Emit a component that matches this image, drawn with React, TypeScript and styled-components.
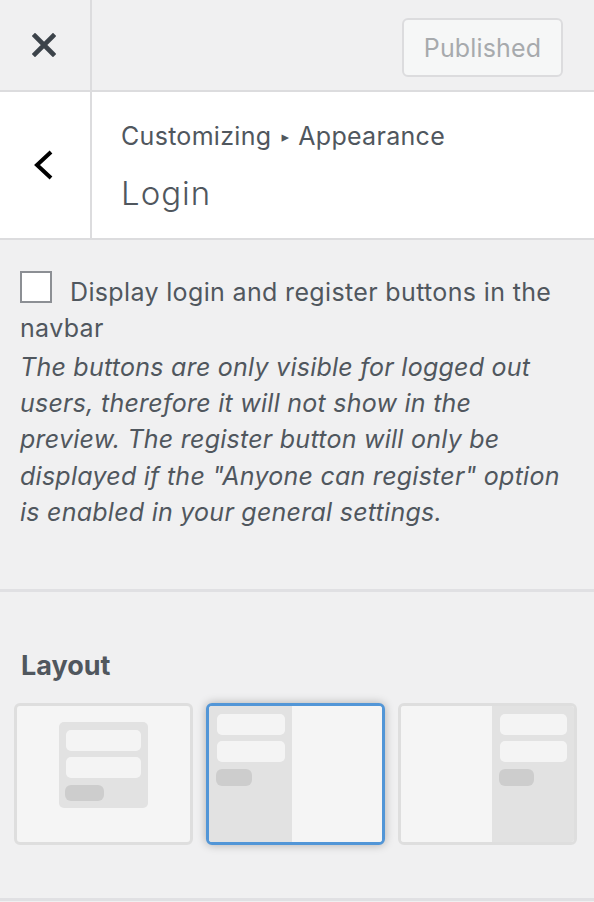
import React from "react";
import styled, { createGlobalStyle, css } from "styled-components";

const GlobalStyle = createGlobalStyle`
  html, body {
    margin: 0;
    padding: 0;
    background: #f0f0f1;
  }
  * { box-sizing: border-box; }
`;

const FONT = `Inter, Roboto, "Liberation Sans", sans-serif`;

const Sidebar = styled.div`
  width: 594px;
  height: 902px;
  overflow: hidden;
  background: #f0f0f1;
  font-family: ${FONT};
  color: #50575e;
  display: flex;
  flex-direction: column;
`;

const TopBar = styled.div`
  display: flex;
  height: 92px;
  border-bottom: 2px solid #dcdcde;
  background: #f0f0f1;
`;

const IconCell = styled.div`
  width: 92px;
  flex: none;
  border-right: 2px solid #dcdcde;
  display: flex;
  align-items: center;
  justify-content: center;
  padding-right: 2px;
`;

const TopActions = styled.div`
  flex: 1;
  display: flex;
  justify-content: flex-end;
  align-items: flex-start;
  padding: 18px 31px 0 0;
`;

const PublishButton = styled.button`
  width: 161px;
  height: 59px;
  border: 2px solid #dcdcde;
  border-radius: 6px;
  background: #f6f7f7;
  color: #a7aaad;
  font-family: ${FONT};
  font-size: 25px;
  letter-spacing: 0.15px;
  padding: 0;
  cursor: default;
`;

const SectionHeader = styled.div`
  display: flex;
  height: 148px;
  background: #ffffff;
  border-bottom: 2px solid #dcdcde;
`;

const TitleBlock = styled.div`
  flex: 1;
  padding: 26px 0 0 29px;
  display: flex;
  flex-direction: column;
`;

const Breadcrumb = styled.span`
  font-size: 25px;
  letter-spacing: 0.3px;
  line-height: 36px;
  color: #50575e;
`;

const Arrow = styled.span`
  font-family: "DejaVu Sans", sans-serif;
  font-size: 15px;
  margin: 0 9px 0 10px;
  vertical-align: 3px;
`;

const Title = styled.h3`
  margin: 16px 0 0;
  font-size: 33px;
  font-weight: 300;
  letter-spacing: 1px;
  line-height: 44px;
  color: #50575e;
`;

const Section = styled.div<{ $top: number; $bottom: number }>`
  padding: ${(p) => p.$top}px 20px ${(p) => p.$bottom}px;
  border-bottom: 3px solid #e0e0e3;
`;

const ControlLabel = styled.label`
  display: block;
  font-size: 25px;
  letter-spacing: 0.35px;
  line-height: 36.4px;
  color: #50575e;
`;

const Checkbox = styled.span`
  display: inline-block;
  width: 32px;
  height: 32px;
  border: 2px solid #8c8f94;
  background: #ffffff;
  margin-right: 18px;
  vertical-align: -2px;
`;

const Description = styled.span`
  display: block;
  margin-top: 2px;
  font-size: 25px;
  letter-spacing: 0.25px;
  line-height: 36.3px;
  font-style: italic;
  color: #50575e;
`;

const ControlTitle = styled.span`
  display: block;
  font-size: 27px;
  font-weight: 700;
  line-height: 34px;
  margin: 0 0 20px 1px;
  color: #50575e;
`;

const CardRow = styled.div`
  display: grid;
  grid-template-columns: repeat(3, 179px);
  column-gap: 13px;
  margin-left: -6px;
`;

const Card = styled.div<{ $selected?: boolean }>`
  height: 142px;
  border: 3px solid ${(p) => (p.$selected ? "#5296d7" : "#dedede")};
  border-radius: 6px;
  background: #f5f5f5;
  overflow: hidden;
  display: flex;
  ${(p) =>
    p.$selected &&
    css`
      box-shadow: 0 0 10px rgba(0, 0, 0, 0.28);
    `}
`;

const CenterWrap = styled.div`
  flex: 1;
  display: flex;
  justify-content: center;
  align-items: flex-start;
  padding-top: 16px;
`;

const FormBox = styled.div`
  width: 89px;
  height: 86px;
  background: #e2e2e2;
  border-radius: 5px;
  padding: 8px 7px 7px;
  display: flex;
  flex-direction: column;
  gap: 6px;
`;

const Panel = styled.div<{ $tone: "gray" | "light"; $width?: number }>`
  ${(p) => (p.$width ? `width: ${p.$width}px; flex: none;` : "flex: 1;")}
  background: ${(p) => (p.$tone === "gray" ? "#e2e2e2" : "#f5f5f5")};
  padding: 8px 7px 0 8px;
  display: flex;
  flex-direction: column;
  gap: 6px;
`;

const Field = styled.div`
  height: 21px;
  border-radius: 5px;
  background: #f4f4f4;
`;

const FakeButton = styled.div<{ $w: number }>`
  width: ${(p) => p.$w}px;
  height: 17px;
  margin: 1px 0 0 -1px;
  border-radius: 6px;
  background: #cdcdcd;
`;

const CloseIcon = () => (
  <svg width="24" height="24" viewBox="0 0 24 24">
    <path d="M3 3 L21 21 M21 3 L3 21" stroke="#3c434a" strokeWidth="4.6" strokeLinecap="square" fill="none" />
  </svg>
);

const BackIcon = () => (
  <svg width="20" height="30" viewBox="0 0 20 30">
    <path d="M17 2 L3 15 L17 28" stroke="#000" strokeWidth="4" fill="none" strokeLinejoin="miter" />
  </svg>
);

const FormMock = ({ btn }: { btn: number }) => (
  <>
    <Field />
    <Field />
    <FakeButton $w={btn} />
  </>
);

export default function App() {
  return (
    <>
      <GlobalStyle />
      <Sidebar>
        <TopBar>
          <IconCell>
            <CloseIcon />
          </IconCell>
          <TopActions>
            <PublishButton>Published</PublishButton>
          </TopActions>
        </TopBar>
        <SectionHeader>
          <IconCell>
            <BackIcon />
          </IconCell>
          <TitleBlock>
            <Breadcrumb>
              Customizing<Arrow>▸</Arrow>Appearance
            </Breadcrumb>
            <Title>Login</Title>
          </TitleBlock>
        </SectionHeader>
        <Section $top={31} $bottom={59}>
          <ControlLabel>
            <Checkbox />
            Display login and register buttons in the navbar
          </ControlLabel>
          <Description>
            The buttons are only visible for logged out users, therefore it will not show in the
            preview. The register button will only be displayed if the "Anyone can register" option
            is enabled in your general settings.
          </Description>
        </Section>
        <Section $top={57} $bottom={53}>
          <ControlTitle>Layout</ControlTitle>
          <CardRow>
            <Card>
              <CenterWrap>
                <FormBox>
                  <FormMock btn={39} />
                </FormBox>
              </CenterWrap>
            </Card>
            <Card $selected>
              <Panel $tone="gray" $width={83}>
                <FormMock btn={36} />
              </Panel>
              <Panel $tone="light" />
            </Card>
            <Card>
              <Panel $tone="light" />
              <Panel $tone="gray" $width={82}>
                <FormMock btn={35} />
              </Panel>
            </Card>
          </CardRow>
        </Section>
      </Sidebar>
    </>
  );
}
